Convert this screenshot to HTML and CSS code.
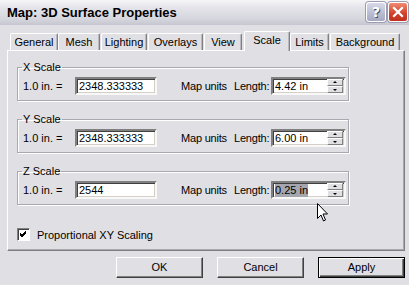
FILE: index.html
```html
<html>
  <head>
    <link rel="stylesheet" href="styles.css">
    <title>Map: 3D Surface Properties</title>
  </head>
  <body>
    <div class="window">
      <div class="titlebar">
        <span class="title">Map: 3D Surface Properties</span>
        <div class="caption">
          <div class="cap help">?</div>
          <div class="cap close">
            <svg width="18" height="18" viewBox="0 0 18 18"><path d="M5 5 L13 13 M13 5 L5 13" stroke="#fff" stroke-width="2.2" stroke-linecap="square"/></svg>
          </div>
        </div>
      </div>

      <div class="tabs">
        <div class="tab t-general">General</div>
        <div class="tab t-mesh">Mesh</div>
        <div class="tab t-lighting">Lighting</div>
        <div class="tab t-overlays">Overlays</div>
        <div class="tab t-view">View</div>
        <div class="tab t-scale active">Scale</div>
        <div class="tab t-limits">Limits</div>
        <div class="tab t-background">Background</div>
      </div>

      <div class="panel">
        <fieldset class="group">
          <legend>X Scale</legend>
          <div class="row">
            <span class="lbl">1.0 in. =</span>
            <div class="field wide">2348.333333</div>
            <span class="units">Map units</span>
            <span class="len">Length:</span>
            <div class="field spin"><span>4.42 in</span><div class="spinbtns"><b class="up"></b><b class="down"></b></div></div>
          </div>
        </fieldset>
        <fieldset class="group">
          <legend>Y Scale</legend>
          <div class="row">
            <span class="lbl">1.0 in. =</span>
            <div class="field wide">2348.333333</div>
            <span class="units">Map units</span>
            <span class="len">Length:</span>
            <div class="field spin"><span>6.00 in</span><div class="spinbtns"><b class="up"></b><b class="down"></b></div></div>
          </div>
        </fieldset>
        <fieldset class="group">
          <legend>Z Scale</legend>
          <div class="row">
            <span class="lbl">1.0 in. =</span>
            <div class="field wide">2544</div>
            <span class="units">Map units</span>
            <span class="len">Length:</span>
            <div class="field spin"><span class="sel">0.25 in</span><div class="spinbtns"><b class="up"></b><b class="down"></b></div></div>
          </div>
        </fieldset>
        <div class="check">
          <span class="box">
            <svg width="11" height="11" viewBox="0 0 11 11"><path d="M2 4 L4 6 L8 2 M2 5 L4 7 L8 3 M2 6 L4 8 L8 4" stroke="#000" stroke-width="1" fill="none"/></svg>
          </span>
          <span>Proportional XY Scaling</span>
        </div>
      </div>

      <div class="buttons">
        <div class="btn">OK</div>
        <div class="btn">Cancel</div>
        <div class="btn default">Apply</div>
      </div>

      <svg class="cursor" width="12" height="20" viewBox="0 0 12 20">
        <path d="M0.5 0.5 L0.5 15.5 L4 12 L6.5 18 L8.5 17 L6 11 L10.5 11 Z" fill="#fff" stroke="#000" stroke-width="1"/>
      </svg>
    </div>
  </body>
</html>
```

FILE: styles.css
```css
body {
  margin: 0;
  font-family: "Liberation Sans", Arial, sans-serif;
  font-size: 11px;
  color: #000;
}

.window {
  position: relative;
  width: 409px;
  height: 285px;
  background: #e0dfe3;
  overflow: hidden;
}

.titlebar {
  height: 25px;
  display: flex;
  align-items: center;
  justify-content: space-between;
  padding: 0 1px 0 7px;
  background: linear-gradient(#f6f6f8, #e4e4ea 30%, #d6d6de 75%, #c6c6d0);
}
.title {
  font-weight: bold;
  font-size: 13px;
  font-family: "Liberation Sans", Arial, sans-serif;
  color: #000;
}
.caption {
  display: flex;
  gap: 2px;
  margin-top: -1px;
}
.cap {
  width: 18px;
  height: 18px;
  border: 1px solid #fff;
  border-radius: 3px;
  display: flex;
  align-items: center;
  justify-content: center;
  box-shadow: 0 0 0 1px #9c9cae;
}
.help {
  background: linear-gradient(#d7d9e8, #a5a8c0);
  color: #fff;
  font-weight: bold;
  font-size: 14px;
  font-family: "DejaVu Sans", sans-serif;
  text-shadow: 1px 1px 0 #4a4c68;
}
.close {
  background: linear-gradient(#f08a72, #d2402a 60%, #c03020);
}

.tabs {
  display: flex;
  height: 20px;
  margin-top: 5px;
  padding-left: 10px;
  align-items: flex-end;
  position: relative;
  z-index: 1;
  white-space: nowrap;
}
.tab {
  height: 16px;
  line-height: 16px;
  border: 1px solid #fff;
  border-bottom: none;
  border-right: 1px solid #808080;
  box-shadow: inset -1px 0 0 #b8b8c0;
  border-radius: 2px 2px 0 0;
  text-align: center;
}
.t-general { width: 46px; }
.t-mesh { width: 40px; }
.t-lighting { width: 44px; margin-left: 1px; }
.t-overlays { width: 53px; margin-left: 1px; }
.t-view { width: 36px; margin-left: 1px; }
.t-scale { width: 44px; }
.t-limits { width: 37px; }
.t-background { width: 68px; margin-left: 1px; }
.tab.active {
  height: 19px;
  line-height: 17px;
  background: #e0dfe3;
  margin-bottom: -1px;
  margin-left: 2px;
}

.panel {
  margin: 0 4px 0 7px;
  height: 189px;
  border: 1px solid #fff;
  border-right: 1px solid #808080;
  border-bottom: 1px solid #808080;
  box-shadow: inset -1px -1px 0 #a8a8b0;
  padding: 10px 0 0 9px;
  white-space: nowrap;
}

.group {
  width: 325px;
  margin: 0 0 12px 0;
  padding: 3px 0 5px 5px;
  border: 1px solid #a8a8b0;
  box-shadow: 1px 1px 0 #fff, inset 1px 1px 0 #fff;
}
.group legend {
  padding: 0 1px;
  margin-left: -1px;
  line-height: 13px;
}

.row {
  display: flex;
  align-items: center;
}
.lbl { width: 52px; }
.field {
  height: 14px;
  line-height: 14px;
  border: 2px solid;
  border-color: #808080 #f8f8f8 #f8f8f8 #808080;
  box-shadow: inset 1px 1px 0 #404040, inset -1px -1px 0 #d4d0c8;
  background: #fff;
  padding: 0 2px;
}
.wide { width: 74px; }
.units { margin-left: 24px; width: 47px; letter-spacing: -0.2px; }
.len { margin-left: 6px; width: 37px; letter-spacing: -0.2px; }
.spin {
  width: 67px;
  display: flex;
  justify-content: space-between;
}
.sel {
  background: #a6a6ae;
  height: 13px;
  line-height: 13px;
  margin-top: 1px;
}
.spinbtns {
  display: flex;
  flex-direction: column;
  margin-right: -1px;
}
.spinbtns b {
  width: 14px;
  height: 5px;
  background: #e0dfe3;
  border: 1px solid;
  border-color: #fff #808080 #808080 #fff;
  position: relative;
}
.spinbtns b::after {
  content: "";
  position: absolute;
  left: 5px;
  border-left: 2px solid transparent;
  border-right: 2px solid transparent;
}
.up::after { top: 1px; border-bottom: 2px solid #000; }
.down::after { top: 2px; border-top: 2px solid #000; }

.check {
  display: flex;
  align-items: center;
  gap: 7px;
  margin-top: 23px;
}
.box {
  width: 11px;
  height: 11px;
  background: #fff;
  border: 1px solid;
  border-color: #808080 #fff #fff #808080;
  box-shadow: inset 1px 1px 0 #404040;
  display: flex;
}

.buttons {
  display: flex;
  justify-content: flex-end;
  gap: 14px;
  margin-top: 6px;
  padding-right: 4px;
}
.btn {
  width: 85px;
  height: 19px;
  line-height: 19px;
  text-align: center;
  background: #e0dfe3;
  border: 1px solid;
  border-color: #fff #404040 #404040 #fff;
  box-shadow: inset -1px -1px 0 #808080;
}
.btn.default {
  border: 1px solid #000;
  box-shadow: inset 1px 1px 0 #fff, inset -1px -1px 0 #404040, inset -2px -2px 0 #808080;
}

.cursor {
  position: absolute;
  left: 317px;
  top: 203px;
}
```
